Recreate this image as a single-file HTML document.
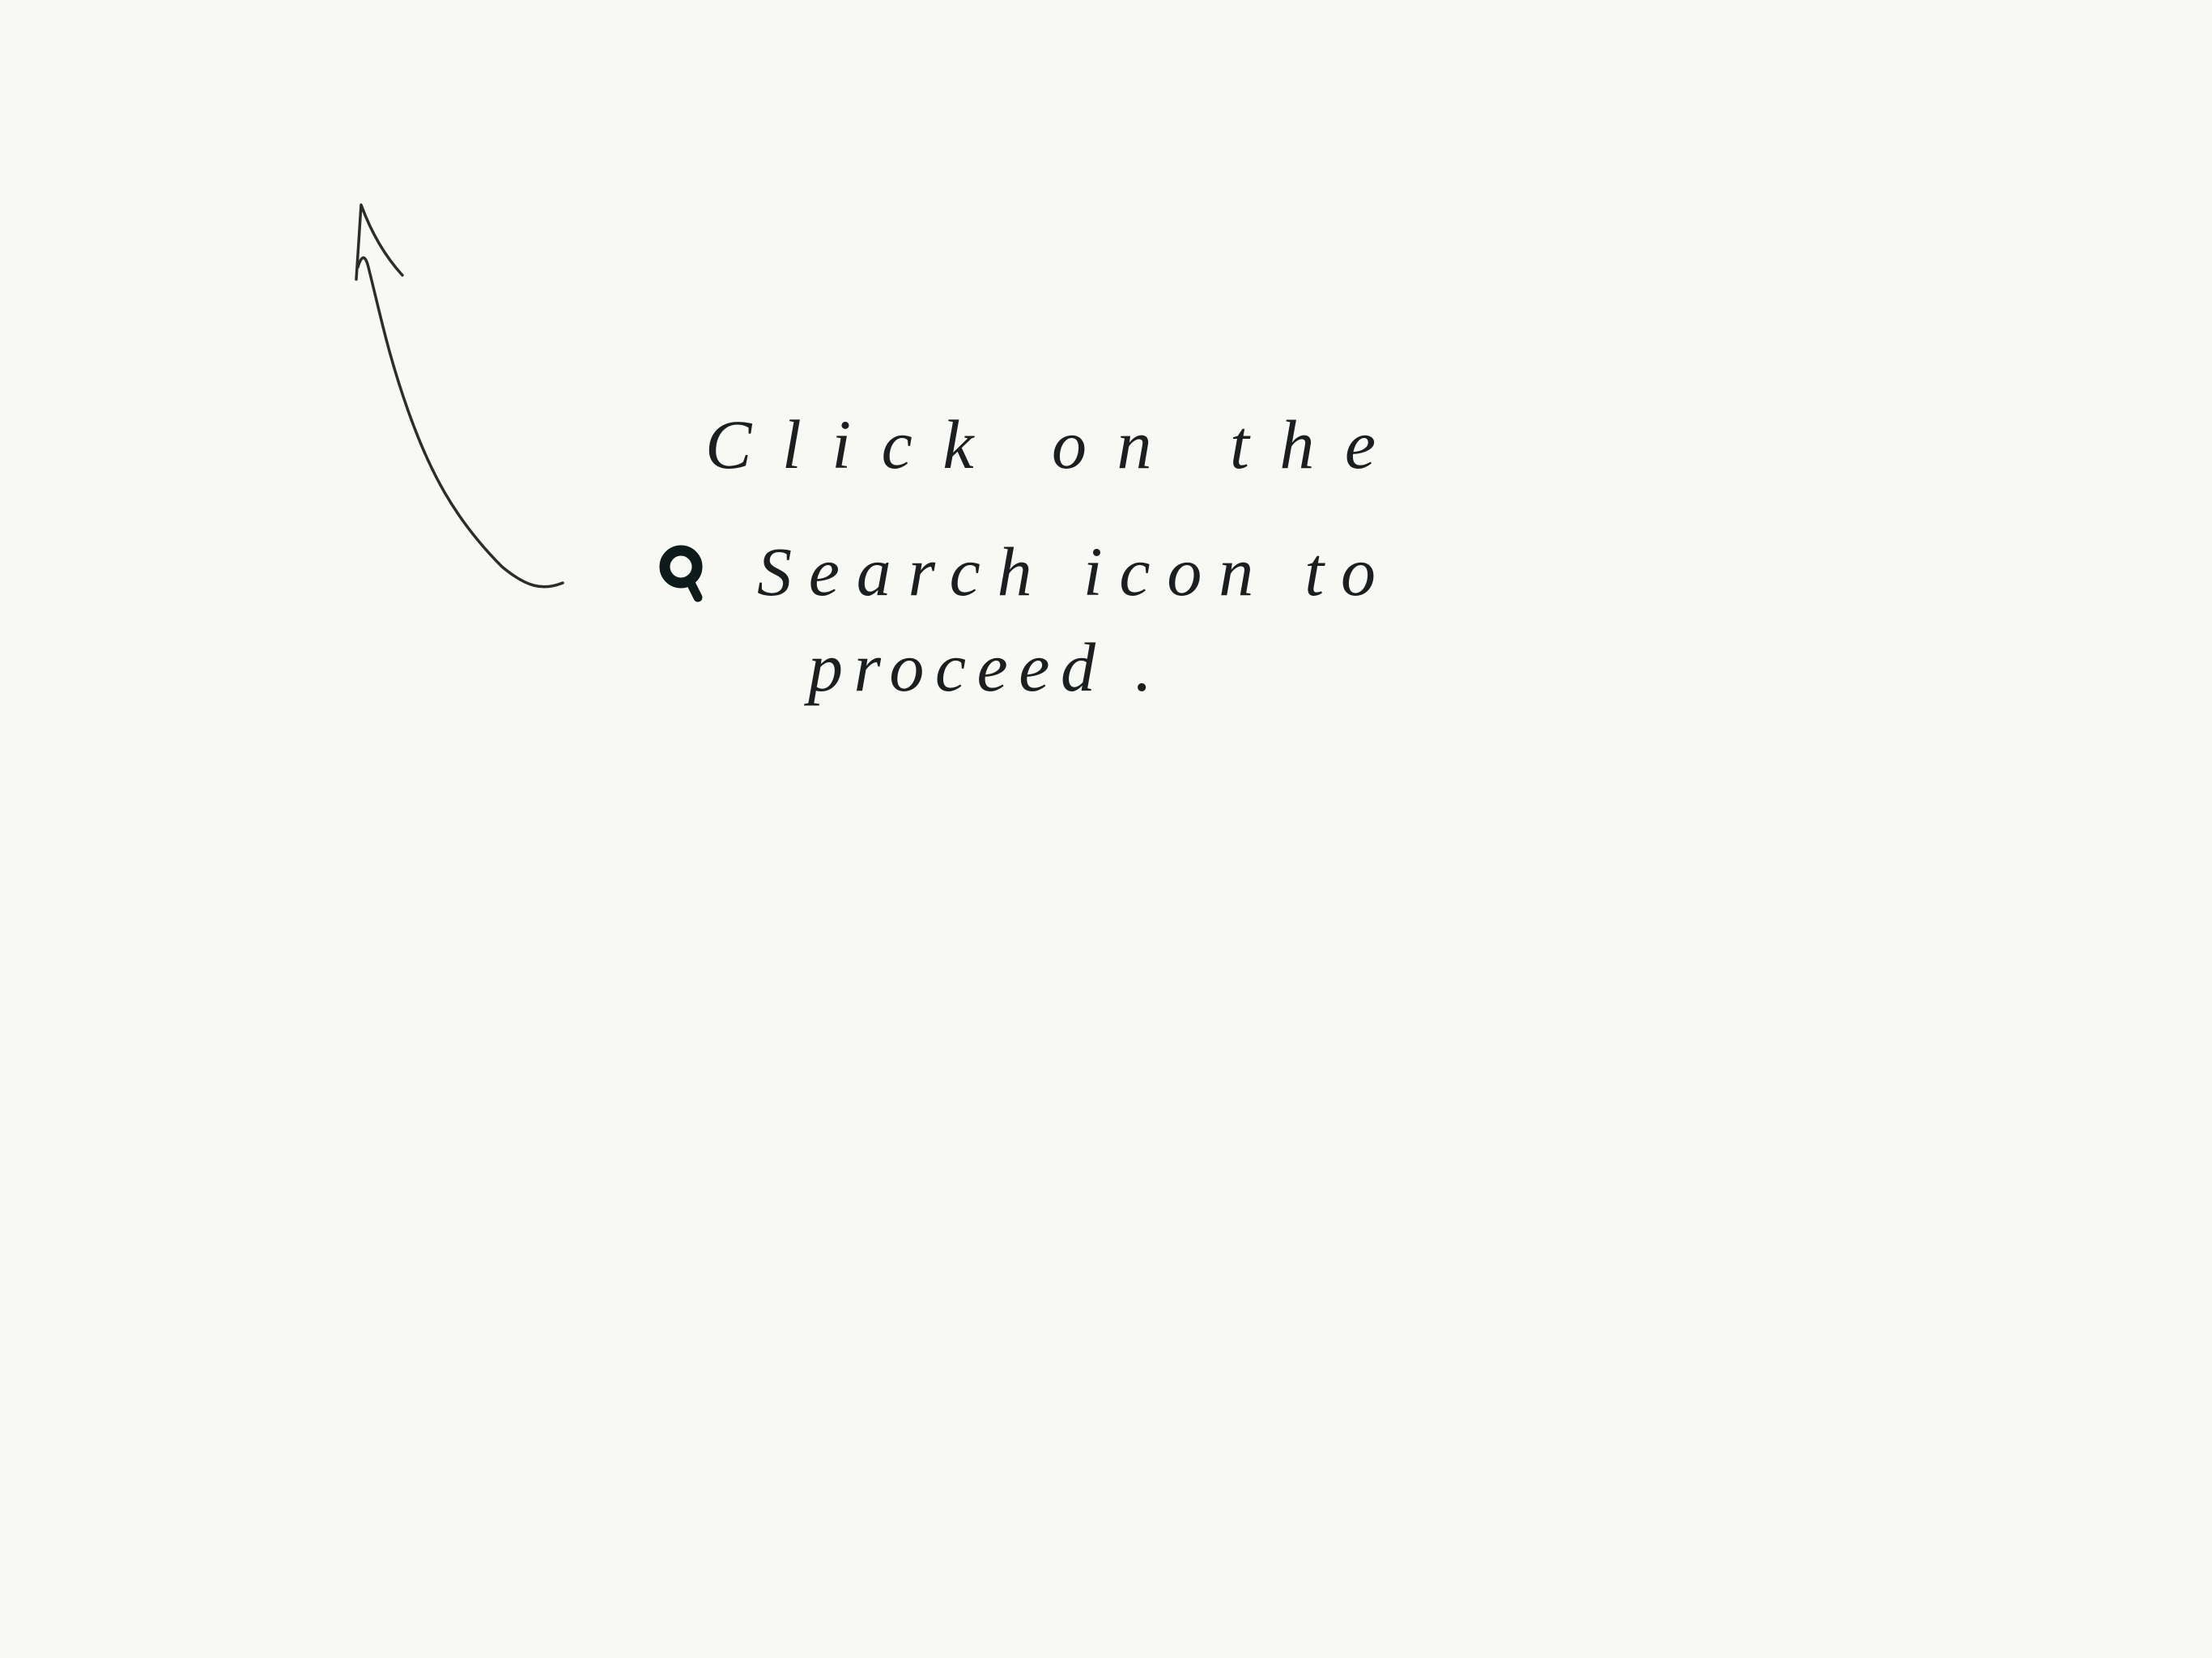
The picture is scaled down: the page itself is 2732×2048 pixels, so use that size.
<!DOCTYPE html>
<html><head><meta charset="utf-8"><style>
html,body{margin:0;padding:0;background:#f8f9f5;}
svg{display:block}
</style></head><body>
<svg width="2732" height="2048" viewBox="0 0 2732 2048" xmlns="http://www.w3.org/2000/svg">
<rect width="2732" height="2048" fill="#f8f9f5"/>
<g fill="none" stroke="#2a2d2c" stroke-width="3.5" stroke-linecap="round" stroke-linejoin="round">
<path d="M695 720 C670 730 650 725 620 700 C560 640 530 580 505 510 C480 440 470 390 455 330 C450 310 445 320 442 330"/>
<path d="M440 345 L446 253 Q465 305 497 340"/>
</g>
<g fill="none" stroke="#0f1a1a" stroke-linecap="round">
<circle cx="841" cy="700" r="20" stroke-width="13"/>
<path d="M852 718 L862 738" stroke-width="11"/>
</g>
<g font-family="'Liberation Serif', serif" font-style="italic" fill="#1c1f1f" font-size="86">
<text x="871" y="578" textLength="828" lengthAdjust="spacing">Click   on   the</text>
<text x="935" y="735" textLength="764" lengthAdjust="spacing">Search   icon   to</text>
<text x="998" y="853" textLength="425" lengthAdjust="spacing">proceed  .</text>
</g>
</svg>
</body></html>
